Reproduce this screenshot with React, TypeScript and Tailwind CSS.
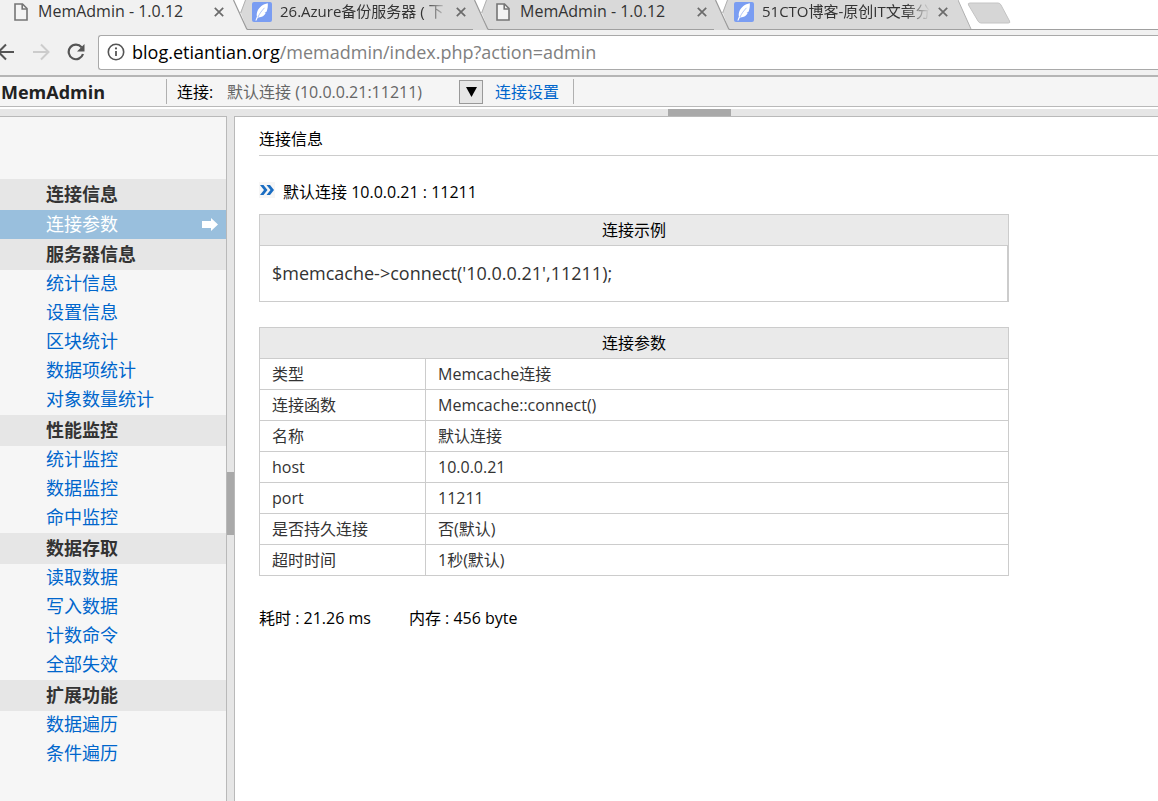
import React from "react";

const font =
  "font-['Open_Sans','Noto_Sans_CJK_SC',sans-serif]";

type Item = { label: string; active?: boolean };
type Group = { title: string; items: Item[] };

const groups: Group[] = [
  { title: "连接信息", items: [{ label: "连接参数", active: true }] },
  {
    title: "服务器信息",
    items: [
      { label: "统计信息" },
      { label: "设置信息" },
      { label: "区块统计" },
      { label: "数据项统计" },
      { label: "对象数量统计" },
    ],
  },
  {
    title: "性能监控",
    items: [{ label: "统计监控" }, { label: "数据监控" }, { label: "命中监控" }],
  },
  {
    title: "数据存取",
    items: [
      { label: "读取数据" },
      { label: "写入数据" },
      { label: "计数命令" },
      { label: "全部失效" },
    ],
  },
  { title: "扩展功能", items: [{ label: "数据遍历" }, { label: "条件遍历" }] },
];

const params: [string, string][] = [
  ["类型", "Memcache连接"],
  ["连接函数", "Memcache::connect()"],
  ["名称", "默认连接"],
  ["host", "10.0.0.21"],
  ["port", "11211"],
  ["是否持久连接", "否(默认)"],
  ["超时时间", "1秒(默认)"],
];

function PageIcon() {
  return (
    <svg width="14" height="18" viewBox="0 0 14 18" className="shrink-0" aria-hidden="true">
      <path d="M1 1h7.5L13 5.5V17H1z" fill="#f4f4f4" stroke="#757575" strokeWidth="1.6" />
      <path d="M8.2 1v5H13" fill="none" stroke="#757575" strokeWidth="1.6" />
    </svg>
  );
}

function FeatherIcon() {
  return (
    <svg width="20" height="20" viewBox="0 0 20 20" className="shrink-0" aria-hidden="true">
      <rect width="20" height="20" rx="2" fill="#7a9df2" />
      <path d="M15.800 1.200C11 2.200 7 5 5.400 9.300c-.7 1.900-.9 3.600-.5 5.200l-1.500 4 .9.200 1.600-3.200c4 .2 6.500-1.500 7.800-4.400l-1.200-.1 2-1.300c1.100-2.600 1.500-5.400 1.300-8.500z" fill="#fff" />
      <path d="M12.500 5.800C9.800 8.800 7.500 11.500 6 15" fill="none" stroke="#7a9df2" strokeWidth=".6" />
    </svg>
  );
}

function CloseButton({ label }: { label: string }) {
  return (
    <button type="button" aria-label={label} className="shrink-0">
      <svg width="10" height="10" viewBox="0 0 10 10" className="block" aria-hidden="true">
        <path d="M.8.8l8.400 8.400M9.200.8L.8 9.200" stroke="#6b6b6b" strokeWidth="1.7" fill="none" />
      </svg>
    </button>
  );
}

function TabEdge({ left }: { left: string }) {
  return (
    <svg width="20" height="30" viewBox="0 0 20 30" className="shrink-0" aria-hidden="true">
      <path d="M20 0h-6.500L8.500 12 15 29.500h5z" fill="#d9d9d9" />
      <path d="M0 0h1.500L15 29.500V30H0z" fill={left} />
      <path d="M13.500 0L8.700 13" stroke="#b0b0b0" fill="none" />
      <path d="M1.500 0L14.500 28.500q.4 1 1.500 1h4" stroke="#9a9a9a" strokeWidth="1.200" fill="none" />
    </svg>
  );
}

const tabText = "h-6 min-w-0 flex-1 overflow-hidden whitespace-nowrap leading-[22px] text-[#333]";
const fade = " text-[15px] [mask-image:linear-gradient(to_right,black_86%,transparent)]";

function TabStrip() {
  return (
    <div role="tablist" className="flex h-[30px] overflow-hidden bg-white text-base">
      <div role="tab" aria-selected="true" className="flex w-[232px] shrink-0 items-start bg-[#f1f1f1] pl-[14px] pr-2">
        <div className="flex h-6 w-full items-center gap-[10px]">
          <PageIcon />
          <span className={tabText}>MemAdmin - 1.0.12</span>
          <CloseButton label="关闭 MemAdmin" />
        </div>
      </div>
      <TabEdge left="#f1f1f1" />
      <div role="tab" aria-selected="false" className="flex w-[221px] shrink-0 items-start border-b border-[#a0a0a0] bg-[#d9d9d9] pr-[7px]">
        <div className="flex h-6 w-full items-center gap-2">
          <FeatherIcon />
          <span className={tabText + fade}>26.Azure备份服务器 ( 下</span>
          <CloseButton label="关闭 Azure" />
        </div>
      </div>
      <TabEdge left="#d9d9d9" />
      <div role="tab" aria-selected="false" className="flex w-[221px] shrink-0 items-start border-b border-[#a0a0a0] bg-[#d9d9d9] pl-[3px] pr-[7px]">
        <div className="flex h-6 w-full items-center gap-[10px]">
          <PageIcon />
          <span className={tabText}>MemAdmin - 1.0.12</span>
          <CloseButton label="关闭 MemAdmin" />
        </div>
      </div>
      <TabEdge left="#d9d9d9" />
      <div role="tab" aria-selected="false" className="flex w-[224px] shrink-0 items-start border-b border-[#a0a0a0] bg-[#d9d9d9] pr-[10px]">
        <div className="flex h-6 w-full items-center gap-2">
          <FeatherIcon />
          <span className={tabText + fade}>51CTO博客-原创IT文章分</span>
          <CloseButton label="关闭 51CTO" />
        </div>
      </div>
      <div className="flex flex-1 items-start border-b border-[#a0a0a0]">
        <svg width="56" height="29" viewBox="0 0 56 29" className="shrink-0" aria-label="新标签页" role="img">
          <path d="M0 0L13 29H0z" fill="#d9d9d9" />
          <path d="M0 0L13 29" stroke="#b0b0b0" fill="none" />
          <path d="M12 3h28q2 0 3 2l8.500 16q1 2-1 2H23q-2 0-3-2L10.500 5q-1-2 1.500-2z" fill="#d6d6d6" stroke="#c4c4c4" />
        </svg>
      </div>
    </div>
  );
}

function Toolbar() {
  return (
    <div className="flex h-[45px] items-start bg-[#f1f1f1] pt-[5px]">
      <div className="flex h-[34px] w-[98px] shrink-0 items-center gap-[17px] overflow-hidden">
        <button type="button" aria-label="后退" className="w-[15px] shrink-0">
          <svg width="15" height="18" viewBox="0 0 15 18" aria-hidden="true">
            <path d="M14 9H-1M6 1.500L-1.500 9 6 16.500" stroke="#555" strokeWidth="2" fill="none" />
          </svg>
        </button>
        <button type="button" aria-label="前进" className="w-[18px] shrink-0">
          <svg width="18" height="18" viewBox="0 0 18 18" aria-hidden="true">
            <path d="M1 9h15M9 1.500L16.500 9 9 16.500" stroke="#ccc" strokeWidth="2" fill="none" />
          </svg>
        </button>
        <button type="button" aria-label="重新加载" className="w-[18px] shrink-0">
          <svg width="18" height="18" viewBox="0 0 18 18" aria-hidden="true">
            <path d="M14.600 4.200A7.300 7.300 0 1 0 16 11" stroke="#555" strokeWidth="2.200" fill="none" />
            <path d="M17.500 1v7.500H10z" fill="#555" />
          </svg>
        </button>
      </div>
      <div className="flex h-[35px] min-w-0 flex-1 items-center gap-[7px] rounded-l-[3px] border border-r-0 border-[#a9a9a9] bg-white pb-px pl-2">
        <svg width="18" height="18" viewBox="0 0 18 18" className="shrink-0" aria-label="网站信息" role="img">
          <circle cx="9" cy="9" r="7.700" stroke="#555" strokeWidth="1.600" fill="none" />
          <path d="M9 8v5" stroke="#555" strokeWidth="1.800" />
          <circle cx="9" cy="5.400" r="1.100" fill="#555" />
        </svg>
        <span className="whitespace-nowrap text-[18px] leading-7 text-[#808080]">
          <span className="text-black">blog.etiantian.org</span>/memadmin/index.php?action=admin
        </span>
      </div>
    </div>
  );
}

function Header() {
  return (
    <header className="flex h-8 items-center border-b border-t-2 border-b-[#b9b9b9] border-t-[#b5b5b5] bg-[#f5f5f5] text-base">
      <h1 className="w-[166px] shrink-0 pl-px font-['Open_Sans',sans-serif] text-[18px] font-bold leading-6 text-[#222]">
        MemAdmin
      </h1>
      <div className="flex h-[25px] items-center border-x border-[#b0b0b0] pl-[10px] pr-[14px]">
        <label htmlFor="conn" className="w-[50px] text-black">连接:</label>
        <div className="relative">
          <select id="conn" className="block h-6 w-[256px] appearance-none bg-transparent text-[#666] outline-none">
            <option>默认连接 (10.0.0.21:11211)</option>
          </select>
          <span className="pointer-events-none absolute right-0 top-0 flex h-6 w-6 items-center justify-center border border-[#999] bg-[#e6e6e6]">
            <svg width="11" height="10" viewBox="0 0 11 10" aria-hidden="true">
              <path d="M0 0h11L5.500 10z" fill="#000" />
            </svg>
          </span>
        </div>
        <a href="#settings" className="pl-3 text-[#0066cc]">连接设置</a>
      </div>
    </header>
  );
}

function Sidebar() {
  return (
    <nav className="w-[227px] shrink-0 border-r border-t border-[#b9b9b9] bg-[#f6f6f6] pt-[62px] text-[18px]">
      {groups.map((g) => (
        <section key={g.title}>
          <h2 className="h-[31px] bg-[#e6e6e6] pl-[46px] font-bold leading-[30px] text-[#333]">{g.title}</h2>
          <ul>
            {g.items.map((it) => (
              <li key={it.label}>
                {it.active ? (
                  <a href="#item" className="flex h-[29px] items-center justify-between bg-[#99bfdd] pl-[46px] pr-2 leading-[29px] text-white">
                    {it.label}
                    <svg width="16" height="13" viewBox="0 0 16 13" aria-hidden="true">
                      <path d="M0 3h9V0l7 6.500L9 13v-3H0z" fill="#fff" />
                    </svg>
                  </a>
                ) : (
                  <a href="#item" className="block h-[29px] pl-[46px] leading-[27px] text-[#0066cc]">{it.label}</a>
                )}
              </li>
            ))}
          </ul>
        </section>
      ))}
    </nav>
  );
}

function Main() {
  return (
    <main className="min-w-0 flex-1 border-l border-t border-[#b9b9b9] bg-white pl-6 text-base text-black">
      <h2 className="h-[39px] border-b border-[#ccc] pt-[10px] leading-6">连接信息</h2>
      <div className="mt-6 flex h-6 items-center gap-2">
        <svg width="16" height="16" viewBox="0 0 16 16" className="mb-1 bg-[#f6f6f6]" aria-hidden="true">
          <path d="M1 3h3.500L8.500 8l-4 5H1l4-5zM7.500 3H11l4 5-4 5H7.500l4-5z" fill="#1a6dc2" />
        </svg>
        <p>默认连接 10.0.0.21 : 11211</p>
      </div>
      <table className="mt-[10px] w-[750px] max-w-full border-collapse border border-[#ccc]">
        <thead>
          <tr>
            <th className="h-[31px] border border-[#ccc] bg-[#eaeaea] font-normal leading-6">连接示例</th>
          </tr>
        </thead>
        <tbody>
          <tr>
            <td className="border border-[#ccc] p-0 text-[18px] text-[#333]">
              <div className="border-r border-[#ccc] px-3 leading-[55px]">
                $memcache-&gt;connect('10.0.0.21',11211);
              </div>
            </td>
          </tr>
        </tbody>
      </table>
      <table className="mt-[25px] w-[750px] max-w-full table-fixed border-collapse border border-[#ccc]">
        <colgroup>
          <col className="w-[166px]" />
          <col />
        </colgroup>
        <thead>
          <tr>
            <th colSpan={2} className="h-[31px] border border-[#ccc] bg-[#eaeaea] font-normal leading-6">连接参数</th>
          </tr>
        </thead>
        <tbody>
          {params.map(([k, v]) => (
            <tr key={k} className="text-[#333]">
              <th scope="row" className="h-[31px] border border-[#ccc] pl-3 text-left font-normal leading-6">{k}</th>
              <td className="h-[31px] border border-[#ccc] pl-3 leading-6">{v}</td>
            </tr>
          ))}
        </tbody>
      </table>
      <footer className="mt-[30px] flex gap-[38px] leading-6">
        <p>耗时 : 21.26 ms</p>
        <p>内存 : 456 byte</p>
      </footer>
    </main>
  );
}

export default function App() {
  return (
    <div className={"flex min-h-screen flex-col overflow-hidden bg-white " + font}>
      <TabStrip />
      <Toolbar />
      <Header />
      <div className="mt-[2px] flex flex-1 flex-col bg-[#e6e6e6]">
        <div className="flex h-[7px] justify-center pl-60">
          <div className="w-[63px] bg-[#a9a9a9]" />
        </div>
        <div className="flex flex-1">
          <Sidebar />
          <div className="flex w-[7px] shrink-0 flex-col pt-[356px]">
            <div className="h-[63px] bg-[#a9a9a9]" />
          </div>
          <Main />
        </div>
      </div>
    </div>
  );
}
